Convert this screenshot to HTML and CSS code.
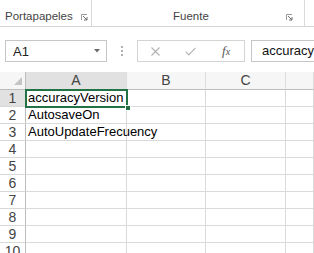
FILE: index.html
```html
<!DOCTYPE html>
<html lang="es">
<head>
  <meta charset="UTF-8">
  <title>Libro1 - Excel</title>
  <link rel="stylesheet" href="styles.css">
</head>
<body>
  <div class="ribbon">
    <div class="group clip">
      <span class="glabel">Portapapeles</span>
      <svg class="launcher" width="7" height="7" viewBox="0 0 7 7"><path d="M0.5 6V0.5H6" fill="none" stroke="#9a9a9a"/><path d="M2 2L6 6M6 3V6H3" fill="none" stroke="#6f6f6f"/></svg>
    </div>
    <div class="group fonts">
      <span class="glabel">Fuente</span>
      <svg class="launcher" width="7" height="7" viewBox="0 0 7 7"><path d="M0.5 6V0.5H6" fill="none" stroke="#9a9a9a"/><path d="M2 2L6 6M6 3V6H3" fill="none" stroke="#6f6f6f"/></svg>
    </div>
  </div>

  <div class="fbar">
    <div class="namebox">
      <span>A1</span>
      <svg class="arrow" width="6" height="4" viewBox="0 0 6 4"><path d="M0 0H6L3 3.5Z" fill="#6a6a6a"/></svg>
    </div>
    <div class="grip"><i></i><i></i><i></i></div>
    <div class="fbtns">
      <svg class="cancel" width="9" height="9" viewBox="0 0 9 9"><path d="M0.5 0.5L8.5 8.5M8.5 0.5L0.5 8.5" stroke="#b4b4b4" stroke-width="1.2"/></svg>
      <svg class="enter" width="11" height="9" viewBox="0 0 11 9"><path d="M0.7 4.6L3.8 7.8L10.4 0.8" fill="none" stroke="#b4b4b4" stroke-width="1.2"/></svg>
      <span class="fx">f<small>x</small></span>
    </div>
    <div class="finput">accuracyVersion</div>
  </div>

  <div class="sheet">
    <div class="hd corner"><svg width="8" height="8" viewBox="0 0 8 8"><path d="M8 0V8H0Z" fill="#c4c4c4"/></svg></div>
    <div class="hd col sel">A</div>
    <div class="hd col">B</div>
    <div class="hd col">C</div>
    <div class="hd col"></div>

    <div class="hd row sel">1</div>
    <div class="cell active">accuracyVersion<span class="frame"><b class="handle"></b></span></div>
    <div class="cell"></div><div class="cell"></div><div class="cell"></div>

    <div class="hd row">2</div>
    <div class="cell">AutosaveOn</div>
    <div class="cell"></div><div class="cell"></div><div class="cell"></div>

    <div class="hd row">3</div>
    <div class="cell">AutoUpdateFrecuency</div>
    <div class="cell"></div><div class="cell"></div><div class="cell"></div>

    <div class="hd row">4</div>
    <div class="cell"></div><div class="cell"></div><div class="cell"></div><div class="cell"></div>
    <div class="hd row">5</div>
    <div class="cell"></div><div class="cell"></div><div class="cell"></div><div class="cell"></div>
    <div class="hd row">6</div>
    <div class="cell"></div><div class="cell"></div><div class="cell"></div><div class="cell"></div>
    <div class="hd row">7</div>
    <div class="cell"></div><div class="cell"></div><div class="cell"></div><div class="cell"></div>
    <div class="hd row">8</div>
    <div class="cell"></div><div class="cell"></div><div class="cell"></div><div class="cell"></div>
    <div class="hd row">9</div>
    <div class="cell"></div><div class="cell"></div><div class="cell"></div><div class="cell"></div>
    <div class="hd row">10</div>
    <div class="cell"></div><div class="cell"></div><div class="cell"></div><div class="cell"></div>
  </div>
</body>
</html>
```

FILE: styles.css
```css
* {
  box-sizing: border-box;
}
body {
  margin: 0;
  width: 314px;
  height: 253px;
  overflow: hidden;
  background: #fff;
  font-family: 'Liberation Sans', Arial, sans-serif;
  color: #000;
}

/* ribbon group labels */
.ribbon {
  display: flex;
  height: 27px;
  border-bottom: 1px solid #d6d6d6;
}
.group {
  display: flex;
  flex: none;
  align-items: flex-end;
  height: 26px;
  padding-bottom: 3px;
  border-right: 1px solid #dadada;
}
.glabel {
  font-size: 11.5px;
  line-height: 13px;
  color: #444;
}
.launcher {
  margin-left: auto;
  margin-bottom: 2px;
}
.clip {
  width: 92px;
  padding-left: 5px;
}
.clip .launcher {
  margin-right: 3px;
}
.fonts {
  width: 213px;
  padding-left: 81px;
}
.fonts .launcher {
  margin-right: 11px;
}

/* formula bar */
.fbar {
  display: flex;
  height: 22px;
  margin-top: 13px;
  white-space: nowrap;
}
.fbar > * {
  flex: none;
}
.namebox {
  display: flex;
  align-items: center;
  width: 102px;
  height: 22px;
  margin-left: 5px;
  padding-left: 7px;
  border: 1px solid #c6c6c6;
  font-size: 13px;
  color: #222;
}
.namebox .arrow {
  margin-left: auto;
  margin-right: 6px;
}
.grip {
  display: flex;
  flex-direction: column;
  align-items: center;
  justify-content: center;
  gap: 2px;
  width: 30px;
}
.grip i {
  width: 2px;
  height: 2px;
  background: #b0b0b0;
}
.fbtns {
  display: flex;
  align-items: center;
  width: 108px;
  height: 22px;
  padding-left: 13px;
  border: 1px solid #d4d4d4;
}
.enter {
  margin-left: 25px;
}
.fx {
  margin-left: 26px;
  font-family: 'Liberation Serif', serif;
  font-style: italic;
  font-size: 13px;
  color: #555;
}
.fx small {
  font-size: 10px;
}
.finput {
  width: 140px;
  height: 22px;
  margin-left: 6px;
  padding-left: 10px;
  border: 1px solid #c6c6c6;
  font-size: 13px;
  line-height: 20px;
  color: #111;
  overflow: hidden;
}

/* sheet grid */
.sheet {
  display: grid;
  grid-template-columns: 26px 101px 79px 80px 28px;
  grid-template-rows: 18px;
  grid-auto-rows: 17px;
  margin-top: 10px;
}
.hd {
  background: #f6f6f6;
  color: #444;
  font-size: 14px;
  line-height: 16px;
  text-align: center;
  border-right: 1px solid #d8d8d8;
  border-bottom: 1px solid #d8d8d8;
}
.col {
  border-bottom-color: #bdbdbd;
  border-right-color: #dedede;
}
.row {
  border-right-color: #bdbdbd;
  background: #fff;
}
.hd.sel {
  background: #e1e1e1;
}
.corner {
  display: flex;
  align-items: flex-end;
  justify-content: flex-end;
  padding: 0 3px 4px 0;
  border-right-color: #bdbdbd;
  border-bottom-color: #bdbdbd;
}
.cell {
  position: relative;
  font-size: 13px;
  line-height: 16px;
  padding-left: 2px;
  white-space: nowrap;
  border-right: 1px solid #dadada;
  border-bottom: 1px solid #dadada;
}
.frame {
  position: absolute;
  left: -1px;
  top: -1px;
  right: -2px;
  bottom: -2px;
  border: 2px solid #217346;
  z-index: 2;
}
.handle {
  position: absolute;
  right: -5px;
  bottom: -5px;
  width: 6px;
  height: 6px;
  background: #217346;
  border: 1px solid #fff;
}
```
